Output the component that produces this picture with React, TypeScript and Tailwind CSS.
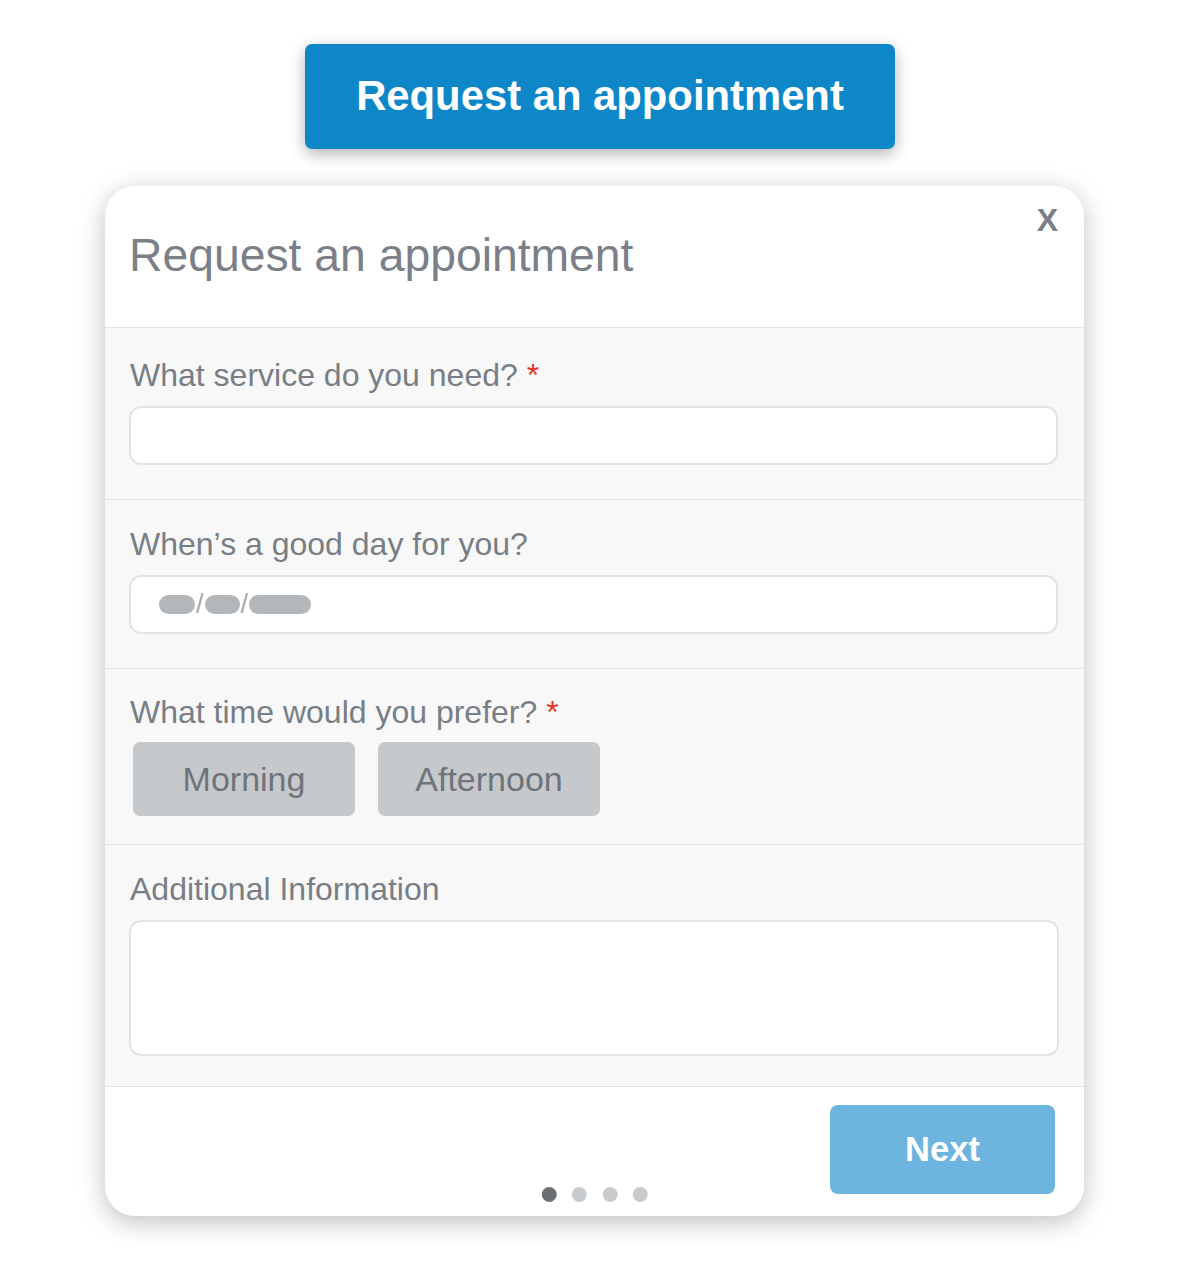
export default function App() {
  const label = "text-[32px] leading-[32px] text-[#787e85]";
  const field = "ml-[24px] w-[929px] rounded-[12px] border-2 border-[#e3e3e3] bg-white";
  const choice =
    "flex h-[74px] w-[222px] items-center justify-center rounded-[7px] bg-[#c6c9cc] text-[34px] text-[#6f747a]";

  return (
    <div className="min-h-[1271px] bg-white pt-[44px] font-['Liberation_Sans',Arial,sans-serif]">
      <button className="ml-[305px] flex h-[105px] w-[590px] items-center justify-center rounded-[7px] bg-[#0e87c9] text-[41.8px] font-bold text-white shadow-[0_5px_16px_rgba(0,0,0,0.3)]">
        Request an appointment
      </button>

      <div className="ml-[105px] mt-[37px] w-[979px] overflow-hidden rounded-[30px] bg-white shadow-[0_6px_26px_rgba(0,0,0,0.25)]">
        {/* header */}
        <div className="relative h-[142px] border-b border-[#e3e3e3] pl-[24px] pt-[46px]">
          <h2 className="text-[46.3px] leading-[46px] text-[#7b8088]">Request an appointment</h2>
          <button className="absolute right-[26px] top-[18px] text-[32px] font-bold leading-[32px] text-[#7b8088]">
            X
          </button>
        </div>

        {/* service */}
        <div className="border-b border-[#e3e3e3] bg-[#f8f8f8] pb-[34px] pt-[31px]">
          <div className={`${label} pl-[25px]`}>
            What service do you need? <span className="text-[#e8302a]">*</span>
          </div>
          <div className={`${field} mt-[15px] h-[59px]`} />
        </div>

        {/* day */}
        <div className="border-b border-[#e3e3e3] bg-[#f8f8f8] pb-[34px] pt-[28px]">
          <div className={`${label} pl-[25px]`}>When’s a good day for you?</div>
          <div className={`${field} mt-[15px] flex h-[59px] items-center pl-[28px]`}>
            <span className="h-[19px] w-[36px] rounded-full bg-[#b3b7ba]" />
            <span className="mx-[1px] text-[27px] leading-none text-[#a6aaae]">/</span>
            <span className="h-[19px] w-[35px] rounded-full bg-[#b3b7ba]" />
            <span className="mx-[1px] text-[27px] leading-none text-[#a6aaae]">/</span>
            <span className="h-[19px] w-[62px] rounded-full bg-[#b3b7ba]" />
          </div>
        </div>

        {/* time */}
        <div className="border-b border-[#e3e3e3] bg-[#f8f8f8] pb-[28px] pt-[27px]">
          <div className={`${label} pl-[25px]`}>
            What time would you prefer? <span className="text-[#e8302a]">*</span>
          </div>
          <div className="ml-[28px] mt-[14px] flex gap-[23px]">
            <button className={choice}>Morning</button>
            <button className={choice}>Afternoon</button>
          </div>
        </div>

        {/* additional */}
        <div className="border-b border-[#e3e3e3] bg-[#f8f8f8] pb-[30px] pt-[28px]">
          <div className={`${label} pl-[25px]`}>Additional Information</div>
          <div className={`${field} mt-[15px] h-[136px] w-[930px]`} />
        </div>

        {/* footer */}
        <div className="relative flex h-[129px] justify-end pr-[29px] pt-[18px]">
          <button className="flex h-[89px] w-[225px] items-center justify-center rounded-[8px] bg-[#6db4df] text-[34.5px] font-bold text-white">
            Next
          </button>
          <div className="absolute bottom-[14px] left-1/2 flex -translate-x-1/2 gap-[15.5px]">
            <span className="h-[15px] w-[15px] rounded-full bg-[#6b6e73]" />
            <span className="h-[15px] w-[15px] rounded-full bg-[#c8cbce]" />
            <span className="h-[15px] w-[15px] rounded-full bg-[#c8cbce]" />
            <span className="h-[15px] w-[15px] rounded-full bg-[#c8cbce]" />
          </div>
        </div>
      </div>
    </div>
  );
}
